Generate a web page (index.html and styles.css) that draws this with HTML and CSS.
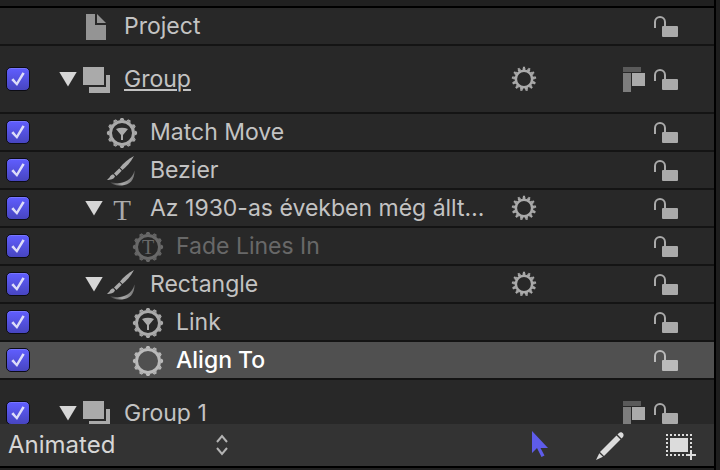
FILE: index.html
```html
<!DOCTYPE html>
<html lang="en">
<head>
    <meta charset="UTF-8">
    <meta name="viewport" content="width=device-width, initial-scale=1.0">
    <title>Layers</title>
    <link rel="stylesheet" href="styles.css">
</head>
<body>
    <!-- shared icons -->
    <svg class="sprite" aria-hidden="true">
        <defs>
            <linearGradient id="swoosh" x1="0" x2="1">
                <stop offset="0" stop-color="#aaa" stop-opacity="0.1"/>
                <stop offset="0.5" stop-color="#aaa"/>
                <stop offset="1" stop-color="#aaa" stop-opacity="0.6"/>
            </linearGradient>
        </defs>
        <symbol id="i-lock" viewBox="0 0 24 24">
            <path d="M1 14V8a5 5 0 0 1 10 0v6" fill="none" stroke="currentColor" stroke-width="2"/>
            <rect x="8" y="12" width="16" height="11" rx="1" fill="currentColor"/>
        </symbol>
        <symbol id="i-page" viewBox="0 0 32 32">
            <path d="M6 4h9v11h11v15H6z" fill="#949494"/>
            <path d="M17 4l9 9h-9z" fill="#949494"/>
        </symbol>
        <symbol id="i-group" viewBox="0 0 32 32">
            <path d="M3 4h21v18H3z" fill="currentColor"/>
            <path d="M26 12h4v18H9v-6h17z" fill="currentColor"/>
        </symbol>
        <symbol id="i-ring" viewBox="0 0 32 32">
            <g fill="none" stroke="currentColor">
                <circle cx="16" cy="17" r="11.5" stroke-width="3"/>
                <circle cx="16" cy="17" r="13.5" stroke-width="1.5" pathLength="24" stroke-dasharray="1.2 0.8" stroke-dashoffset="0.6"/>
                <circle cx="16" cy="17" r="14.5" stroke-width="1.2" pathLength="24" stroke-dasharray="0.8 1.2" stroke-dashoffset="0.4"/>
            </g>
        </symbol>
        <symbol id="i-funnel" viewBox="0 0 32 32">
            <use href="#i-ring"/>
            <path d="M10 13q6-2.500 12 0l-5 6v5h-2v-5z" fill="currentColor"/>
        </symbol>
        <symbol id="i-ringtext" viewBox="0 0 32 32">
            <use href="#i-ring"/>
            <text x="16" y="24" class="ring-letter">T</text>
        </symbol>
        <symbol id="i-brush" viewBox="0 0 32 32">
            <path d="M28 2c-6 3-11 7.500-14 11.500l2.500 2.500c4-3.500 8-7.500 11.500-14z" fill="currentColor"/>
            <path d="M13.300 14.300L8 19.500l2.500 2.500 5.200-5.200z" fill="currentColor"/>
            <path d="M7.200 20.300c-2 .4-3 1.700-3.500 2.900L1 26c3.500 0 7-.6 8-3.700z" fill="currentColor"/>
            <path d="M4 28c9 3 21.500.5 24.500-11.500.3 9.500-5 14.500-12.500 15C10 32 6 30.500 4 28z" fill="url(#swoosh)"/>
        </symbol>
        <symbol id="i-gear" viewBox="0 0 26 26">
            <g fill="none" stroke="currentColor">
                <circle cx="13" cy="13" r="8.200" stroke-width="2.600"/>
                <circle cx="13" cy="13" r="10" stroke-width="1.800" pathLength="26" stroke-dasharray="1.200 0.800" stroke-dashoffset="0.600" transform="rotate(-90 13 13)"/>
                <circle cx="13" cy="13" r="11.400" stroke-width="1.600" pathLength="26" stroke-dasharray="0.800 1.200" stroke-dashoffset="0.400" transform="rotate(-90 13 13)"/>
            </g>
        </symbol>
        <symbol id="i-layers" viewBox="0 0 22 26">
            <path d="M0 1h18v5H0z" fill="#5a5a5a"/>
            <path d="M0 7h8v19H0z" fill="#7d7d7d"/>
            <path d="M9 7h13v13H9z" fill="currentColor"/>
        </symbol>
    </svg>

    <main class="panel">
        <ul class="list">
            <li class="row">
                <span class="check"></span>
                <span class="arrow"></span>
                <svg class="icon"><use href="#i-page"/></svg>
                <span class="name">Project</span>
                <button class="lock" aria-label="Lock Project"><svg><use href="#i-lock"/></svg></button>
            </li>
            <li class="row tall">
                <span class="check"><input type="checkbox" aria-label="Group" checked></span>
                <button class="arrow open" aria-label="Collapse Group"></button>
                <svg class="icon"><use href="#i-group"/></svg>
                <span class="name"><u>Group</u></span>
                <button class="gear" aria-label="Group behaviors"><svg><use href="#i-gear"/></svg></button>
                <svg class="layers"><use href="#i-layers"/></svg>
                <button class="lock" aria-label="Lock Group"><svg><use href="#i-lock"/></svg></button>
            </li>
            <li class="row level-1">
                <span class="check"><input type="checkbox" aria-label="Match Move" checked></span>
                <span class="arrow"></span>
                <svg class="icon"><use href="#i-funnel"/></svg>
                <span class="name">Match Move</span>
                <button class="lock" aria-label="Lock Match Move"><svg><use href="#i-lock"/></svg></button>
            </li>
            <li class="row level-1">
                <span class="check"><input type="checkbox" aria-label="Bezier" checked></span>
                <span class="arrow"></span>
                <svg class="icon"><use href="#i-brush"/></svg>
                <span class="name">Bezier</span>
                <button class="lock" aria-label="Lock Bezier"><svg><use href="#i-lock"/></svg></button>
            </li>
            <li class="row level-1">
                <span class="check"><input type="checkbox" aria-label="Text" checked></span>
                <button class="arrow open" aria-label="Collapse text"></button>
                <span class="icon letter">T</span>
                <span class="name" lang="hu">Az 1930-as években még állt…</span>
                <button class="gear" aria-label="Text behaviors"><svg><use href="#i-gear"/></svg></button>
                <span class="layers"></span>
                <button class="lock" aria-label="Lock text"><svg><use href="#i-lock"/></svg></button>
            </li>
            <li class="row level-2 off">
                <span class="check"><input type="checkbox" aria-label="Fade Lines In" checked></span>
                <span class="arrow"></span>
                <svg class="icon"><use href="#i-ringtext"/></svg>
                <span class="name">Fade Lines In</span>
                <button class="lock" aria-label="Lock Fade Lines In"><svg><use href="#i-lock"/></svg></button>
            </li>
            <li class="row level-1">
                <span class="check"><input type="checkbox" aria-label="Rectangle" checked></span>
                <button class="arrow open" aria-label="Collapse Rectangle"></button>
                <svg class="icon"><use href="#i-brush"/></svg>
                <span class="name">Rectangle</span>
                <button class="gear" aria-label="Rectangle behaviors"><svg><use href="#i-gear"/></svg></button>
                <span class="layers"></span>
                <button class="lock" aria-label="Lock Rectangle"><svg><use href="#i-lock"/></svg></button>
            </li>
            <li class="row level-2">
                <span class="check"><input type="checkbox" aria-label="Link" checked></span>
                <span class="arrow"></span>
                <svg class="icon"><use href="#i-funnel"/></svg>
                <span class="name">Link</span>
                <button class="lock" aria-label="Lock Link"><svg><use href="#i-lock"/></svg></button>
            </li>
            <li class="row level-2 selected">
                <span class="check"><input type="checkbox" aria-label="Align To" checked></span>
                <span class="arrow"></span>
                <svg class="icon"><use href="#i-ring"/></svg>
                <span class="name">Align To</span>
                <button class="lock" aria-label="Lock Align To"><svg><use href="#i-lock"/></svg></button>
            </li>
            <li class="row tall">
                <span class="check"><input type="checkbox" aria-label="Group 1" checked></span>
                <button class="arrow open" aria-label="Collapse Group 1"></button>
                <svg class="icon"><use href="#i-group"/></svg>
                <span class="name">Group 1</span>
                <svg class="layers"><use href="#i-layers"/></svg>
                <button class="lock" aria-label="Lock Group 1"><svg><use href="#i-lock"/></svg></button>
            </li>
        </ul>

        <footer class="bar">
            <div class="filter">
                <select aria-label="Show">
                    <option>Animated</option>
                </select>
                <svg viewBox="0 0 12 22"><path d="M1 8l5-6 5 6M1 14l5 6 5-6" fill="none" stroke="#b4b4b4" stroke-width="2"/></svg>
            </div>
            <div class="tools">
                <button aria-label="Select">
                    <svg viewBox="0 0 32 32"><path d="M8 2v22l5-5 4.500 9 3-1.500-4-7.500H24z" fill="#5e5cea"/></svg>
                </button>
                <button aria-label="Draw">
                    <svg viewBox="0 0 32 32">
                        <path d="M6 23L22.500 6.500l4 4L10 27z" fill="#dcdcdc"/>
                        <path d="M23.500 5.500l1.500-1.500c2.500-2 6 1 4 4l-1.500 1.500z" fill="#dcdcdc"/>
                        <path d="M5.300 24.200L2 31l7-3.200z" fill="#dcdcdc"/>
                    </svg>
                </button>
                <button aria-label="Add mask">
                    <svg viewBox="0 0 32 32">
                        <path d="M2 6h26M2 26h20" fill="none" stroke="#dcdcdc" stroke-width="2" stroke-dasharray="2 2"/>
                        <path d="M3 9v16M27 9v13" fill="none" stroke="#dcdcdc" stroke-width="2" stroke-dasharray="2 2"/>
                        <path d="M6 9h18v14H6z" fill="#dcdcdc"/>
                        <path d="M27 21v10M22 26h10" stroke="#dcdcdc" stroke-width="2"/>
                    </svg>
                </button>
            </div>
        </footer>
    </main>
</body>
</html>
```

FILE: styles.css
```css
* {
    box-sizing: border-box;
}
body {
    margin: 0;
    height: 100vh;
    background: #1e1e1e;
    color: #c3c3c3;
    font-family: Inter, "Liberation Sans", sans-serif;
    font-size: 23px;
    line-height: 28px;
}
button {
    padding: 0;
    border: none;
    background: none;
    color: inherit;
    cursor: pointer;
}
svg {
    display: block;
    flex: none;
}
.sprite {
    position: absolute;
    width: 0;
    height: 0;
}
.panel {
    display: flex;
    flex-direction: column;
    height: 100vh;
    margin-right: 4px;
    padding: 6px 0 2px;
    border-right: 2px solid #000;
    background: #202020;
}

/* Layer list */
.list {
    flex: 1;
    min-height: 0;
    margin: 0;
    padding: 0;
    overflow: hidden;
    list-style: none;
    border-top: 2px solid #000;
    background: #282828;
}
.row {
    display: flex;
    align-items: center;
    height: 38px;
    padding-right: 36px;
    border-bottom: 2px solid #141414;
}
.row.tall {
    height: 68px;
}
.check {
    flex: none;
    display: flex;
    width: 56px;
    padding-left: 6px;
}
.check input {
    appearance: none;
    display: grid;
    place-items: center;
    width: 24px;
    height: 24px;
    margin: 0;
    border: 1px solid #0c0c14;
    border-radius: 5px;
    background: linear-gradient(#605eff, #4745c0);
    box-shadow: inset 0 1px #7775ff;
}
.check input:checked::after {
    content: "";
    width: 16px;
    height: 16px;
    background: #dcdcf8;
    clip-path: polygon(8% 56%, 21% 46%, 41% 70%, 78% 8%, 92% 16%, 44% 94%);
}
.arrow {
    flex: none;
    width: 24px;
    height: 15px;
}
.arrow.open::before {
    content: "";
    display: block;
    width: 18px;
    height: 15px;
    margin: 0 auto;
    background: #d6d6d6;
    clip-path: polygon(0 0, 100% 0, 50% 100%);
}
.level-1 .arrow {
    margin-left: 26px;
}
.level-2 .arrow {
    margin-left: 52px;
}
.icon {
    flex: none;
    width: 32px;
    height: 32px;
    margin-right: 12px;
    color: #aaa;
}
.letter {
    font-family: "Liberation Serif", serif;
    font-size: 29px;
    line-height: 36px;
    text-align: center;
}
.ring-letter {
    font-family: "Liberation Serif", serif;
    font-size: 20px;
    text-anchor: middle;
    fill: currentColor;
}
.name {
    flex: 1;
    min-width: 0;
    overflow: hidden;
    white-space: nowrap;
    text-overflow: ellipsis;
}
.name u {
    text-decoration-thickness: 2px;
    text-underline-offset: 2px;
}
.gear,
.lock {
    flex: none;
    color: #aaa;
}
.gear {
    margin-right: 86px;
}
.gear svg {
    width: 26px;
    height: 26px;
}
.lock svg {
    width: 24px;
    height: 24px;
}
.layers {
    flex: none;
    width: 22px;
    height: 26px;
    margin-right: 9px;
    color: #aaa;
}
.off .name,
.off .icon {
    color: #686868;
}
.selected {
    background: #505050;
}
.selected .name {
    color: #fff;
    font-weight: 500;
}
.selected .icon,
.selected .lock {
    color: #bababa;
}

/* Bottom bar */
.bar {
    display: flex;
    align-items: center;
    justify-content: space-between;
    height: 44px;
    padding: 0 18px 0 8px;
    border-bottom: 2px solid #000;
    background: #333;
}
.filter {
    display: grid;
    align-items: center;
    width: 220px;
}
.filter select,
.filter svg {
    grid-area: 1 / 1;
}
.filter select {
    appearance: none;
    width: 100%;
    padding: 0;
    border: none;
    background: none;
    color: #d6d6d6;
    font: inherit;
    font-size: 24px;
}
.filter svg {
    justify-self: end;
    width: 12px;
    height: 22px;
    pointer-events: none;
}
.tools {
    display: flex;
    gap: 38px;
}
.tools svg {
    width: 32px;
    height: 32px;
}
```
